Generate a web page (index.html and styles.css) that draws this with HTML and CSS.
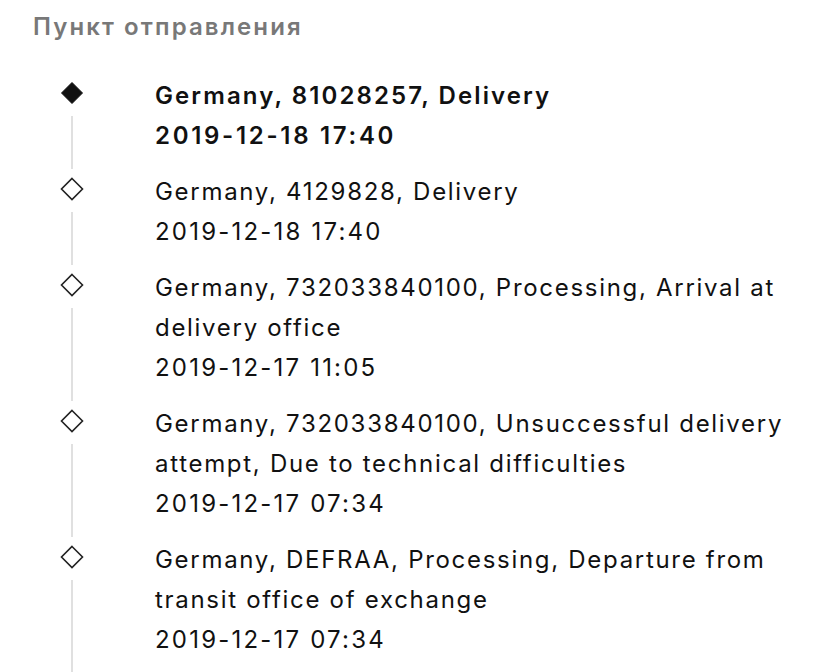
FILE: index.html
```html
<!DOCTYPE html>
<html lang="ru">
<head>
  <meta charset="UTF-8" />
  <meta name="viewport" content="width=device-width, initial-scale=1.0" />
  <title>Отслеживание</title>
  <link rel="stylesheet" href="styles.css">
</head>
<body>
  <div class="tracking">
    <h2 class="section-title">Пункт отправления</h2>
    <ul class="timeline">
      <li class="event current">
        <div class="marker">
          <svg viewBox="0 0 26 26" width="26" height="26"><path d="M13 2.5 L23.5 13 L13 23.5 L2.5 13 Z" /></svg>
          <span class="rail"></span>
        </div>
        <div class="event-text">
          <p>Germany, 81028257, Delivery</p>
          <p class="event-date">2019-12-18 17:40</p>
        </div>
      </li>
      <li class="event">
        <div class="marker">
          <svg viewBox="0 0 26 26" width="26" height="26"><path d="M13 2.5 L23.5 13 L13 23.5 L2.5 13 Z" /></svg>
          <span class="rail"></span>
        </div>
        <div class="event-text">
          <p>Germany, 4129828, Delivery</p>
          <p class="event-date">2019-12-18 17:40</p>
        </div>
      </li>
      <li class="event">
        <div class="marker">
          <svg viewBox="0 0 26 26" width="26" height="26"><path d="M13 2.5 L23.5 13 L13 23.5 L2.5 13 Z" /></svg>
          <span class="rail"></span>
        </div>
        <div class="event-text">
          <p>Germany, 732033840100, Processing, Arrival at delivery office</p>
          <p class="event-date">2019-12-17 11:05</p>
        </div>
      </li>
      <li class="event">
        <div class="marker">
          <svg viewBox="0 0 26 26" width="26" height="26"><path d="M13 2.5 L23.5 13 L13 23.5 L2.5 13 Z" /></svg>
          <span class="rail"></span>
        </div>
        <div class="event-text">
          <p>Germany, 732033840100, Unsuccessful delivery attempt, Due to technical difficulties</p>
          <p class="event-date">2019-12-17 07:34</p>
        </div>
      </li>
      <li class="event">
        <div class="marker">
          <svg viewBox="0 0 26 26" width="26" height="26"><path d="M13 2.5 L23.5 13 L13 23.5 L2.5 13 Z" /></svg>
          <span class="rail"></span>
        </div>
        <div class="event-text">
          <p>Germany, DEFRAA, Processing, Departure from transit office of exchange</p>
          <p class="event-date">2019-12-17 07:34</p>
        </div>
      </li>
    </ul>
  </div>
</body>
</html>
```

FILE: styles.css
```css
* {
  box-sizing: border-box;
  margin: 0;
  padding: 0;
}

body {
  font-family: Inter, 'Noto Sans', sans-serif;
  background: #fff;
  color: #111;
  overflow: hidden;
}

.tracking {
  padding: 11px 20px 0 33px;
}

.section-title {
  font-size: 24px;
  line-height: 32px;
  font-weight: 600;
  letter-spacing: 2.1px;
  color: #787878;
  margin-bottom: 33px;
}

.timeline {
  list-style: none;
  padding-left: 26px;
}

.event {
  display: flex;
  gap: 70px;
  padding-bottom: 16px;
}

.marker {
  width: 26px;
  flex-shrink: 0;
  display: flex;
  flex-direction: column;
  align-items: center;
  padding-top: 4px;
}

.marker svg {
  display: block;
  fill: #fff;
  stroke: #222;
  stroke-width: 1.6;
}

.current .marker svg {
  fill: #111;
  stroke: #111;
  stroke-width: 1;
}

.rail {
  flex: 1;
  width: 2px;
  background: #e0e0e0;
  margin: 10px 0 -13px;
}

.event-text {
  font-size: 24px;
  line-height: 40px;
  letter-spacing: 1.7px;
  max-width: 650px;
}

.event-date {
  letter-spacing: 2.2px;
}

.current .event-text {
  font-weight: 600;
  letter-spacing: 2.1px;
}

.current .event-date {
  letter-spacing: 2.7px;
}
```
